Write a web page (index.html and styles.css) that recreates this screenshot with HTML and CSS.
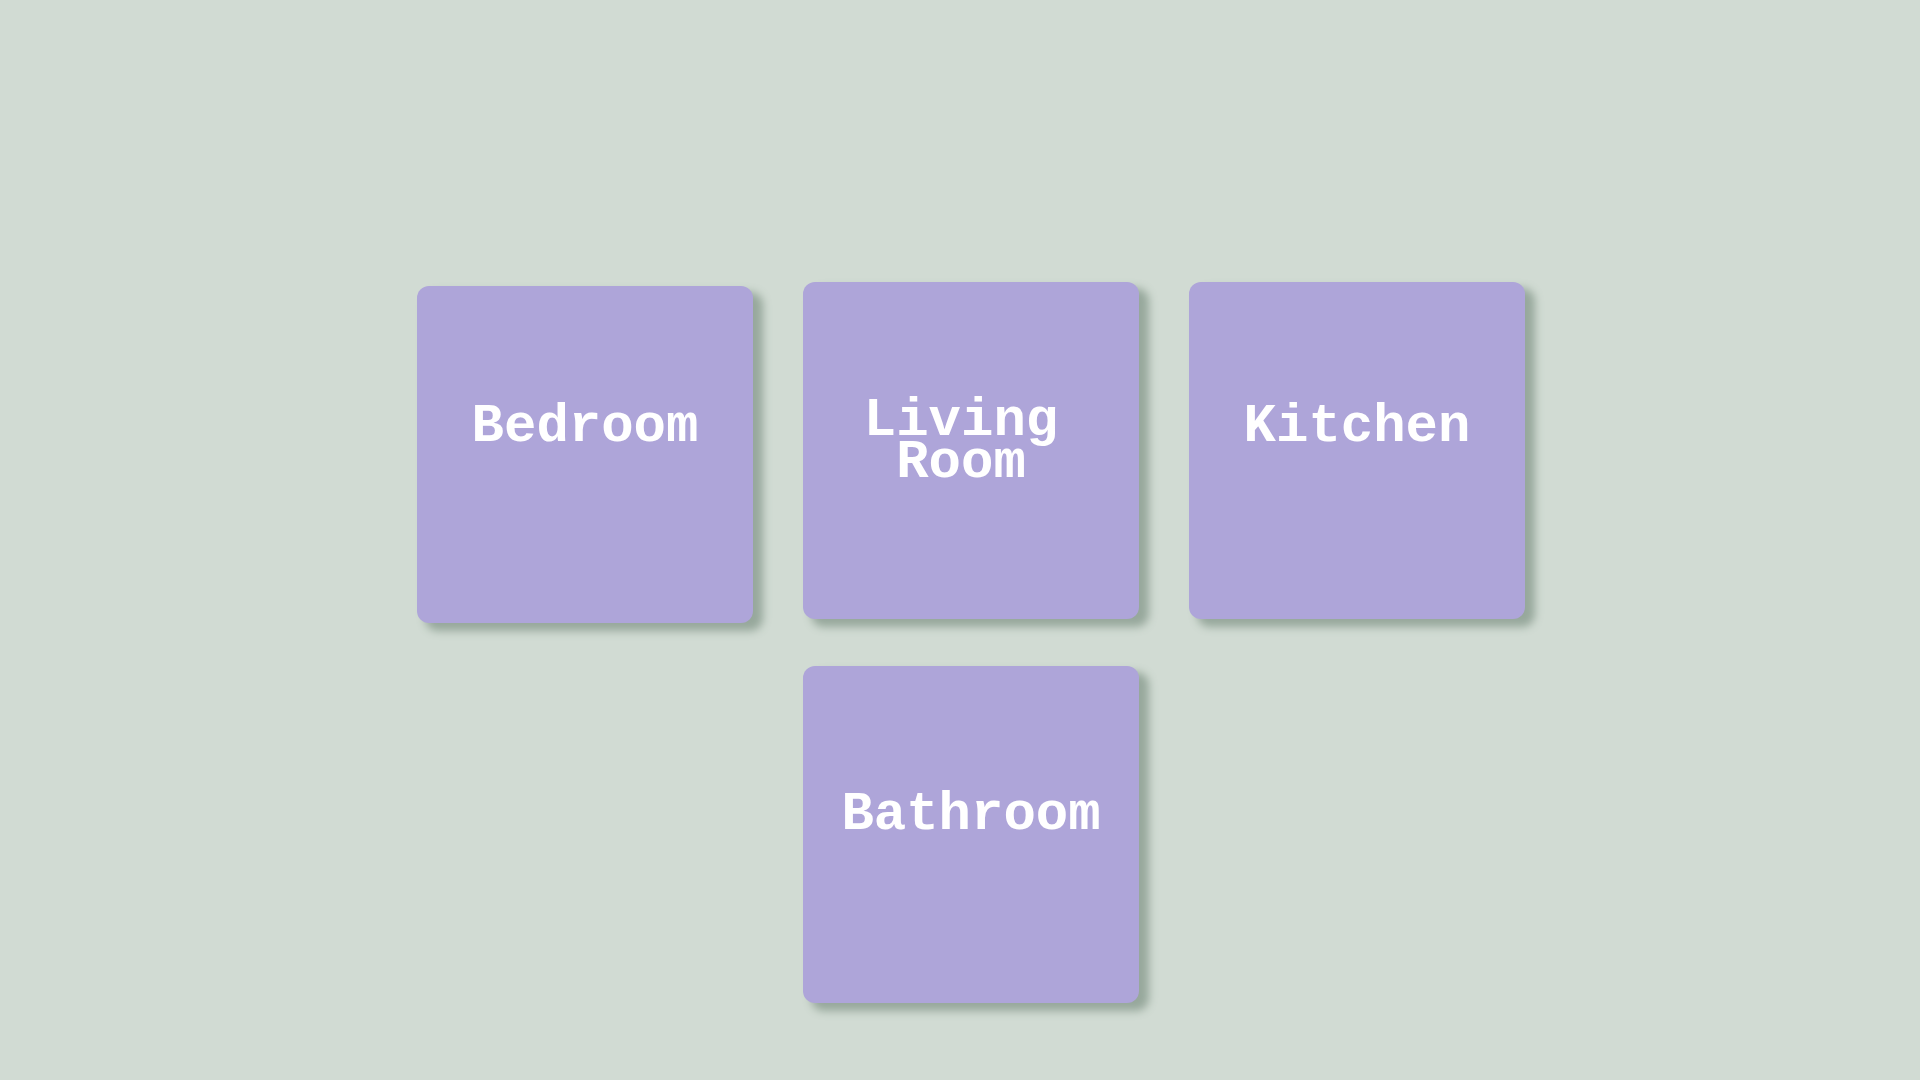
FILE: index.html
```html
<!DOCTYPE html>
<html lang="en">
<head>
  <meta charset="utf-8">
  <meta name="viewport" content="width=device-width, initial-scale=1">
  <title>Rooms</title>
  <link rel="stylesheet" href="styles.css">
</head>
<body>
  <main class="rooms">
    <button type="button" class="room room-low">Bedroom</button>
    <button type="button" class="room room-long">Living<br>Room</button>
    <button type="button" class="room">Kitchen</button>
    <button type="button" class="room room-center">Bathroom</button>
  </main>
</body>
</html>
```

FILE: styles.css
```css
* {
  box-sizing: border-box;
}

body {
  margin: 0;
  min-height: 100vh;
  background: #d1dbd3;
}

.rooms {
  display: grid;
  grid-template-columns: repeat(3, minmax(0, 336px));
  grid-auto-rows: minmax(341px, auto);
  justify-content: center;
  align-items: start;
  gap: 43px 50px;
  padding: 282px 0 40px 22px;
}

.room {
  display: flex;
  justify-content: center;
  align-items: flex-start;
  min-height: 337px;
  padding: 124px 0 0;
  border: 0;
  border-radius: 12px;
  background: #aea5d9;
  box-shadow: 9px 7px 8px 1px #97a89c;
  color: #fff;
  font: bold 54px/42px "Liberation Mono", monospace;
  text-align: center;
  cursor: pointer;
}

.room-low {
  align-self: end;
  padding-top: 120px;
}

.room-long {
  padding: 118px 20px 0 0;
}

.room-center {
  grid-column: 2;
  padding-top: 128px;
}

@media (max-width: 1000px) {
  .rooms {
    grid-template-columns: minmax(0, 336px);
    padding: 40px 20px;
  }

  .room-center {
    grid-column: 1;
  }
}
```
